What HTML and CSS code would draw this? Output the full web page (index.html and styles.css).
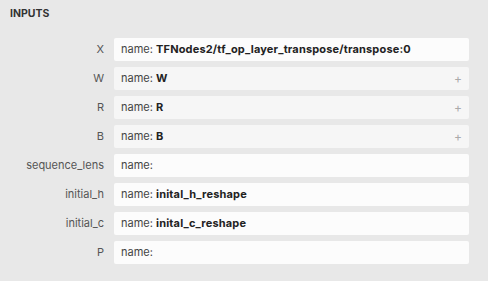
FILE: index.html
```html
<!DOCTYPE html>
<html>
<head>
    <meta charset="utf-8">
    <title>Inputs</title>
    <link rel="stylesheet" href="styles.css">
</head>
<body>
    <div class="sidebar">
        <div class="section-title">INPUTS</div>
        <div class="items">
            <div class="item">
                <div class="item-name">X</div>
                <div class="item-value">name: <b>TFNodes2/tf_op_layer_transpose/transpose:0</b></div>
            </div>
            <div class="item">
                <div class="item-name">W</div>
                <div class="item-value expander">name: <b>W</b><span class="plus">+</span></div>
            </div>
            <div class="item">
                <div class="item-name">R</div>
                <div class="item-value expander">name: <b>R</b><span class="plus">+</span></div>
            </div>
            <div class="item">
                <div class="item-name">B</div>
                <div class="item-value expander">name: <b>B</b><span class="plus">+</span></div>
            </div>
            <div class="item">
                <div class="item-name">sequence_lens</div>
                <div class="item-value">name: </div>
            </div>
            <div class="item">
                <div class="item-name">initial_h</div>
                <div class="item-value">name: <b>inital_h_reshape</b></div>
            </div>
            <div class="item">
                <div class="item-name">initial_c</div>
                <div class="item-value">name: <b>inital_c_reshape</b></div>
            </div>
            <div class="item">
                <div class="item-name">P</div>
                <div class="item-value">name: </div>
            </div>
        </div>
    </div>
</body>
</html>
```

FILE: styles.css
```css
* {
    box-sizing: border-box;
}

body {
    margin: 0;
    background-color: #e8e8e8;
    font-family: Inter, 'Noto Sans', sans-serif;
    font-size: 11px;
    color: #333;
}

.sidebar {
    padding: 8px 19px 0 10px;
}

.section-title {
    font-weight: 700;
    font-size: 10.5px;
    color: #333;
    height: 12px;
    line-height: 12px;
    margin-bottom: 18px;
}

.items {
    display: flex;
    flex-direction: column;
    gap: 6px;
}

.item {
    display: flex;
    align-items: center;
}

.item-name {
    width: 104px;
    padding-right: 10px;
    text-align: right;
    color: #555;
    margin-top: -1px;
}

.item-value {
    flex: 1;
    position: relative;
    height: 23px;
    line-height: 23px;
    padding: 0 7px;
    background-color: #fcfcfc;
    border-radius: 2px;
    color: #444;
    white-space: nowrap;
}

.item-value b {
    color: #222;
    letter-spacing: 0.17px;
}

.item-value.expander {
    background-color: #f6f6f6;
}

.plus {
    position: absolute;
    right: 7px;
    top: 0;
    color: #aaa;
    font-size: 12px;
}
```
